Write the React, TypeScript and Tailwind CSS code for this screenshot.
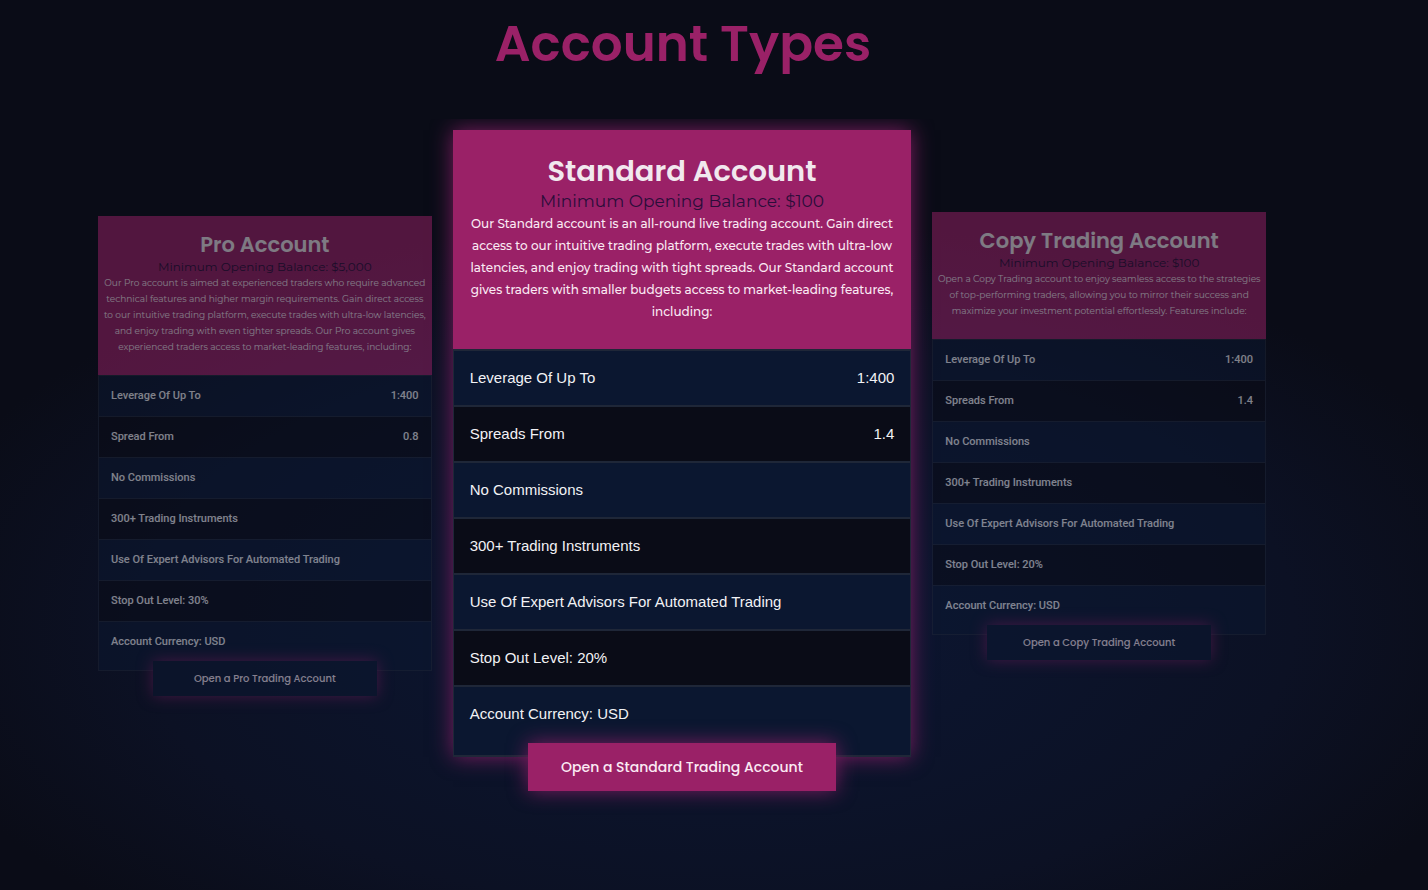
import clsx from 'clsx';

interface Feature {
  label: string;
  value?: string;
}

interface Account {
  name: string;
  balance: string;
  description: string;
  features: Feature[];
  cta: string;
  featured?: boolean;
  offset: string;
}

const ACCOUNTS: Account[] = [
  {
    name: 'Pro Account',
    balance: '$5,000',
    description:
      'Our Pro account is aimed at experienced traders who require advanced technical features and higher margin requirements. Gain direct access to our intuitive trading platform, execute trades with ultra-low latencies, and enjoy trading with even tighter spreads. Our Pro account gives experienced traders access to market-leading features, including:',
    features: [
      { label: 'Leverage Of Up To', value: '1:400' },
      { label: 'Spread From', value: '0.8' },
      { label: 'No Commissions' },
      { label: '300+ Trading Instruments' },
      { label: 'Use Of Expert Advisors For Automated Trading' },
      { label: 'Stop Out Level: 30%' },
      { label: 'Account Currency: USD' },
    ],
    cta: 'Open a Pro Trading Account',
    offset: 'mt-[86px]',
  },
  {
    name: 'Standard Account',
    balance: '$100',
    description:
      'Our Standard account is an all-round live trading account. Gain direct access to our intuitive trading platform, execute trades with ultra-low latencies, and enjoy trading with tight spreads. Our Standard account gives traders with smaller budgets access to market-leading features, including:',
    features: [
      { label: 'Leverage Of Up To', value: '1:400' },
      { label: 'Spreads From', value: '1.4' },
      { label: 'No Commissions' },
      { label: '300+ Trading Instruments' },
      { label: 'Use Of Expert Advisors For Automated Trading' },
      { label: 'Stop Out Level: 20%' },
      { label: 'Account Currency: USD' },
    ],
    cta: 'Open a Standard Trading Account',
    featured: true,
    offset: 'mt-0',
  },
  {
    name: 'Copy Trading Account',
    balance: '$100',
    description:
      'Open a Copy Trading account to enjoy seamless access to the strategies of top-performing traders, allowing you to mirror their success and maximize your investment potential effortlessly. Features include:',
    features: [
      { label: 'Leverage Of Up To', value: '1:400' },
      { label: 'Spreads From', value: '1.4' },
      { label: 'No Commissions' },
      { label: '300+ Trading Instruments' },
      { label: 'Use Of Expert Advisors For Automated Trading' },
      { label: 'Stop Out Level: 20%' },
      { label: 'Account Currency: USD' },
    ],
    cta: 'Open a Copy Trading Account',
    offset: 'mt-[82px]',
  },
];

function AccountCard({ account }: { account: Account }) {
  const { name, balance, description, features, cta, featured, offset } = account;

  return (
    <article className={clsx('flex flex-col items-center', offset, !featured && 'opacity-50')}>
      <div className={clsx('w-full', featured && 'shadow-[0_0_20px_#7b1d60]')}>
        <header
          className={clsx(
            'bg-[#9a2167] text-center',
            featured ? 'px-4 pt-[23px] pb-[26px]' : 'px-1 pt-4 pb-5'
          )}
        >
          <h2
            className={clsx(
              "font-['Poppins','Inter',sans-serif] font-semibold text-[#f1e8ee]",
              featured ? 'text-[29px] leading-9' : 'text-[21px] leading-[26px]'
            )}
          >
            {name}
          </h2>
          <p
            className={clsx(
              "font-['Montserrat','Inter',sans-serif] text-[#2b0d3a]",
              featured ? 'text-[17px] leading-6' : 'text-[12px] leading-[17px]'
            )}
          >
            Minimum Opening Balance: {balance}
          </p>
          <p
            className={clsx(
              "font-['Montserrat','Inter',sans-serif] text-[#fbeaf4]",
              featured ? 'text-[12px] leading-[22px] font-medium' : 'text-[9px] leading-4'
            )}
          >
            {description}
          </p>
        </header>
        <ul className="border-x border-[#1f2738] text-[#f2f2f5]">
          {features.map((feature, i) => (
            <li
              key={feature.label}
              className={clsx(
                'flex items-start justify-between border-[#1f2738]',
                i % 2 === 0 ? 'bg-[#0b1730]' : 'bg-[#0a0c17]',
                featured
                  ? "h-14 border-t-2 px-4 pt-[15px] font-['Liberation_Sans',Arial,sans-serif] text-[15px] leading-6 last:h-[72px] last:border-b-2"
                  : "h-[41px] border-t px-3 pt-3 font-['Roboto',Arial,sans-serif] text-[11px] leading-4 font-medium last:h-[50px] last:border-b"
              )}
            >
              <span>{feature.label}</span>
              {feature.value && <span>{feature.value}</span>}
            </li>
          ))}
        </ul>
      </div>
      <button
        type="button"
        className={clsx(
          "relative font-['Poppins','Inter',sans-serif] font-medium text-[#fbeaf4]",
          featured
            ? '-mt-3.5 h-12 w-[308px] bg-[#9a2167] text-[14px] shadow-[0_0_20px_#7b1d60]'
            : '-mt-2.5 h-[35px] w-56 bg-[#0b1730] text-[10px] shadow-[0_0_15px_#7b1d60]'
        )}
      >
        {cta}
      </button>
    </article>
  );
}

export default function App() {
  return (
    <main className="min-h-screen bg-[#0a0c17] bg-[radial-gradient(ellipse_58%_46%_at_50%_70%,#0d1735_0%,#0c142c_35%,#0c1124_70%,#0a0c17_100%)] pt-2">
      <h1 className="pr-[62px] text-center font-['Poppins','Inter',sans-serif] text-[50px] leading-[72px] font-semibold text-[#9a2167]">
        Account Types
      </h1>
      <section className="mt-[39px] grid grid-cols-[8fr_11fr_8fr] items-start gap-[21px] overflow-hidden pt-[11px] pr-[162px] pb-20 pl-[98px]">
        {ACCOUNTS.map((account) => (
          <AccountCard key={account.name} account={account} />
        ))}
      </section>
    </main>
  );
}
